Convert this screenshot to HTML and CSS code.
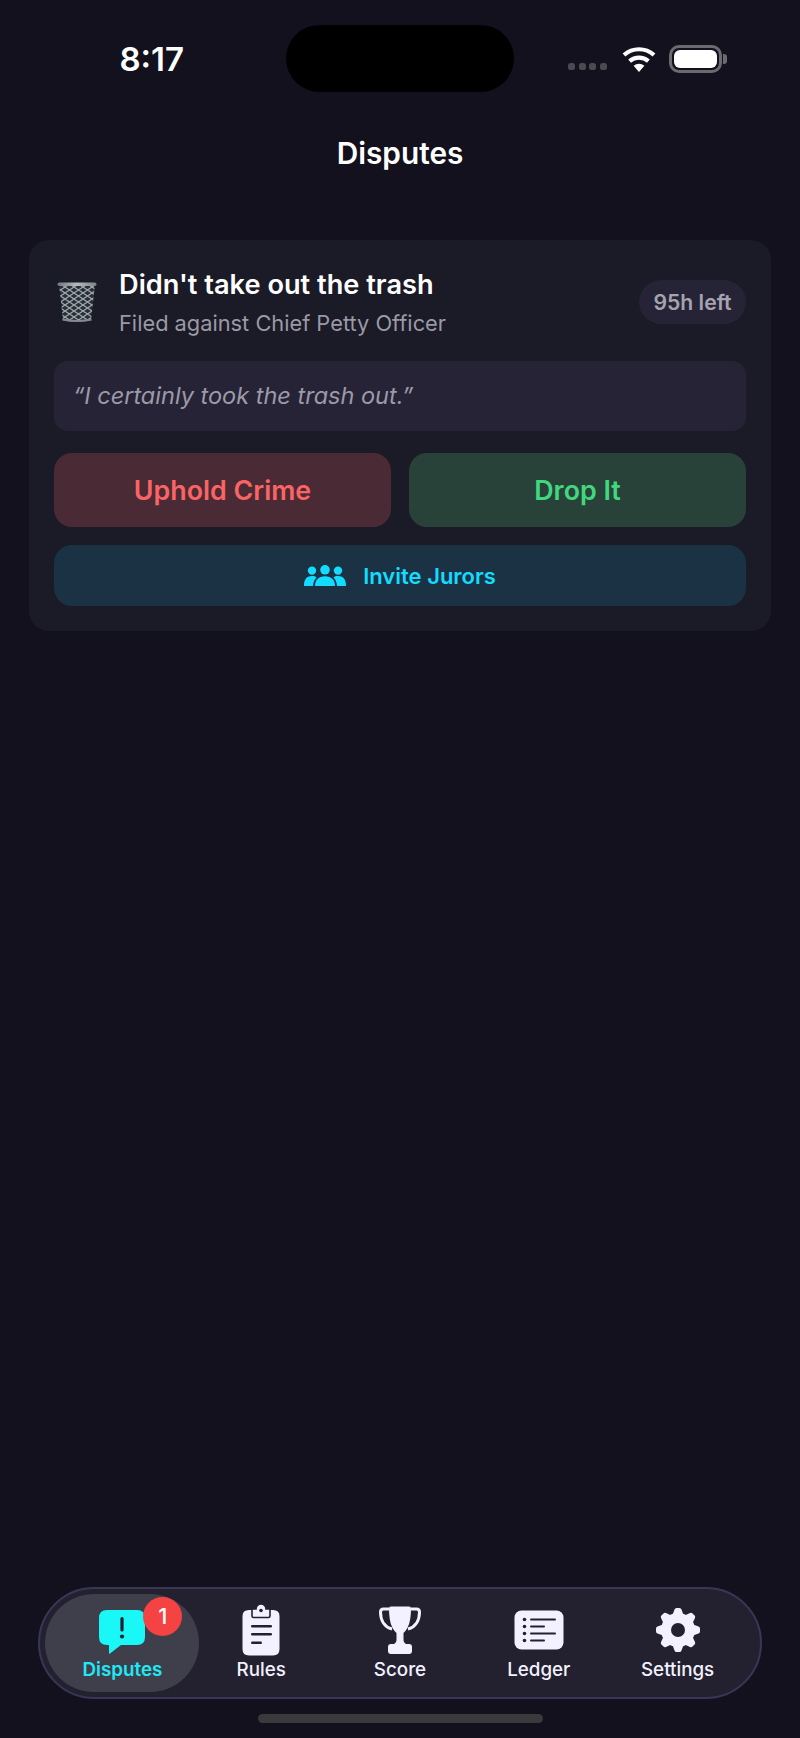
FILE: index.html
```html
<!DOCTYPE html>
<html lang="en">
<head>
  <meta charset="UTF-8">
  <meta name="viewport" content="width=device-width, initial-scale=1.0">
  <title>Disputes</title>
  <link rel="stylesheet" href="styles.css">
</head>
<body>
  <div class="screen">
    <!-- Status bar -->
    <div class="status-bar">
      <div class="time">8:17</div>
      <div class="island"></div>
      <div class="status-icons">
        <div class="signal"><span></span><span></span><span></span><span></span></div>
        <svg class="wifi" width="36" height="26" viewBox="0 0 36 26">
          <path d="M18 26 L12.6 19.8 A8 8 0 0 1 23.4 19.8 Z" fill="#fff"/>
          <path d="M8.6 15.2 A14.4 14.4 0 0 1 27.4 15.2" fill="none" stroke="#fff" stroke-width="4.2"/>
          <path d="M3 9 A22.5 22.5 0 0 1 33 9" fill="none" stroke="#fff" stroke-width="4.2"/>
        </svg>
        <div class="battery"><div class="battery-fill"></div></div>
        <div class="battery-nub"></div>
      </div>
    </div>

    <h1 class="page-title">Disputes</h1>

    <main class="content">
      <div class="card">
        <div class="card-head">
          <svg class="trash" width="42" height="42" viewBox="0 0 42 42">
            <defs>
              <pattern id="mesh" width="9" height="6" patternUnits="userSpaceOnUse">
                <path d="M0 0 L9 6 M9 0 L0 6" stroke="#9fa9b0" stroke-width="1.2"/>
              </pattern>
              <linearGradient id="rim" x1="0" y1="0" x2="1" y2="0">
                <stop offset="0" stop-color="#6f777d"/>
                <stop offset="0.5" stop-color="#b4bbc0"/>
                <stop offset="1" stop-color="#7a8187"/>
              </linearGradient>
            </defs>
            <path d="M3 3 H39 L35 39 Q21 42 7 39 Z" fill="#2a2f36"/>
            <path d="M3 3 H39 L35 39 Q21 42 7 39 Z" fill="url(#mesh)"/>
            <path d="M6.5 38.5 Q21 41.5 35.5 38.5" fill="none" stroke="#838a90" stroke-width="2"/>
            <rect x="1.5" y="1.5" width="39" height="3.6" rx="1.8" fill="url(#rim)"/>
          </svg>
          <div class="card-text">
            <div class="card-title">Didn't take out the trash</div>
            <div class="card-sub">Filed against Chief Petty Officer</div>
          </div>
          <div class="time-left">95h left</div>
        </div>

        <div class="quote">“I certainly took the trash out.”</div>

        <div class="actions">
          <button class="btn btn-uphold">Uphold Crime</button>
          <button class="btn btn-drop">Drop It</button>
        </div>

        <button class="btn-invite">
          <svg width="42" height="22" viewBox="0 0 42 22" fill="#12dcff">
            <circle cx="8" cy="5.6" r="4.2"/>
            <circle cx="34" cy="5.6" r="4.2"/>
            <circle cx="21" cy="4.8" r="4.8"/>
            <path d="M0 20.5 C0 14 3 11 8 11 C10 11 11.5 11.5 12.6 12.4 C10.4 14.4 9.4 17 9 20.5 Q9 21 8.4 21 H1 Q0 21 0 20.5 Z"/>
            <path d="M42 20.5 C42 14 39 11 34 11 C32 11 30.5 11.5 29.4 12.4 C31.6 14.4 32.6 17 33 20.5 Q33 21 33.6 21 H41 Q42 21 42 20.5 Z"/>
            <path d="M11 21 C11 15 14.5 11.2 21 11.2 C27.5 11.2 31 15 31 21 Z"/>
          </svg>
          <span>Invite Jurors</span>
        </button>
      </div>
    </main>

    <!-- Tab bar -->
    <nav class="tab-bar">
      <div class="tab tab-active">
        <div class="tab-icon">
          <svg class="chat-icon" width="46" height="44" viewBox="0 0 46 44">
            <path d="M8 0 H38 Q46 0 46 8 V27 Q46 35 38 35 H22 L11 43.5 Q10 44 10 43 V35 H8 Q0 35 0 27 V8 Q0 0 8 0 Z" fill="#19f7f7"/>
            <rect x="21.4" y="7" width="3.2" height="14.5" rx="1.6" fill="#1a2030"/>
            <circle cx="23" cy="26.5" r="2.1" fill="#1a2030"/>
          </svg>
          <span class="badge">1</span>
        </div>
        <span class="tab-label">Disputes</span>
      </div>
      <div class="tab">
        <div class="tab-icon">
          <svg width="38" height="52" viewBox="0 0 38 52">
            <path d="M7 6 H31 Q37.5 6 37.5 12 V45 Q37.5 51.5 31 51.5 H7 Q0.5 51.5 0.5 45 V12 Q0.5 6 7 6 Z" fill="#f3f1ff"/>
            <path d="M10 6 Q10 5 11 5 H14 A5 5 0 0 1 24 5 H27 Q28 5 28 6 V12 Q28 13.5 26.5 13.5 H11.5 Q10 13.5 10 12 Z" fill="#f3f1ff" stroke="#232130" stroke-width="1.6"/>
            <circle cx="19" cy="6.5" r="1.8" fill="#232130"/>
            <rect x="9" y="21" width="21" height="2.4" rx="1.2" fill="#232130"/>
            <rect x="9" y="29" width="21" height="2.4" rx="1.2" fill="#232130"/>
            <rect x="9" y="37.5" width="11" height="2.4" rx="1.2" fill="#232130"/>
          </svg>
        </div>
        <span class="tab-label">Rules</span>
      </div>
      <div class="tab">
        <div class="tab-icon">
          <svg width="42" height="48" viewBox="0 0 42 48">
            <path d="M10 3 H4.5 Q1.5 3 1.5 6 C1.5 14 5 21 13 23 M32 3 H37.5 Q40.5 3 40.5 6 C40.5 14 37 21 29 23" fill="none" stroke="#f3f1ff" stroke-width="3"/>
            <path d="M10 2 Q10 0.5 12 0.5 H30 Q32 0.5 32 2 C32 14 30 22 24.5 27 V34 C24.5 36 26 37.5 28 38.5 H14 C16 37.5 17.5 36 17.5 34 V27 C12 22 10 14 10 2 Z" fill="#f3f1ff"/>
            <rect x="9" y="38" width="24" height="10" rx="3" fill="#f3f1ff"/>
          </svg>
        </div>
        <span class="tab-label">Score</span>
      </div>
      <div class="tab">
        <div class="tab-icon">
          <svg width="50" height="40" viewBox="0 0 50 40">
            <rect x="0.5" y="0.5" width="49" height="39" rx="7" fill="#f3f1ff"/>
            <circle cx="10.5" cy="9.5" r="1.8" fill="#232130"/>
            <circle cx="10.5" cy="16.5" r="1.8" fill="#232130"/>
            <circle cx="10.5" cy="23.5" r="1.8" fill="#232130"/>
            <circle cx="10.5" cy="30.5" r="1.8" fill="#232130"/>
            <rect x="16" y="8.5" width="26" height="2" rx="1" fill="#232130"/>
            <rect x="16" y="15.5" width="15" height="2" rx="1" fill="#232130"/>
            <rect x="16" y="22.5" width="26" height="2" rx="1" fill="#232130"/>
            <rect x="16" y="29.5" width="15" height="2" rx="1" fill="#232130"/>
          </svg>
        </div>
        <span class="tab-label">Ledger</span>
      </div>
      <div class="tab">
        <div class="tab-icon">
          <svg width="46" height="46" viewBox="0 0 46 46">
            <defs>
              <path id="tooth" d="M17.5 8 L19.5 2.5 Q20 1 21.5 1 H24.5 Q26 1 26.5 2.5 L28.5 8 Z"/>
            </defs>
            <g fill="#f3f1ff">
              <circle cx="23" cy="23" r="17"/>
              <use href="#tooth"/>
              <use href="#tooth" transform="rotate(45 23 23)"/>
              <use href="#tooth" transform="rotate(90 23 23)"/>
              <use href="#tooth" transform="rotate(135 23 23)"/>
              <use href="#tooth" transform="rotate(180 23 23)"/>
              <use href="#tooth" transform="rotate(225 23 23)"/>
              <use href="#tooth" transform="rotate(270 23 23)"/>
              <use href="#tooth" transform="rotate(315 23 23)"/>
            </g>
            <circle cx="23" cy="23" r="7" fill="#232130"/>
          </svg>
        </div>
        <span class="tab-label">Settings</span>
      </div>
    </nav>

    <div class="home-indicator"></div>
  </div>
</body>
</html>
```
FILE: styles.css
```css
/* Disputes screen */
body {
  margin: 0;
  padding: 0;
  background: #12111d;
  color: #fff;
  font-family: Inter, "Liberation Sans", sans-serif;
}

.screen {
  height: 1738px;
  display: flex;
  flex-direction: column;
  overflow: hidden;
}

/* Status bar */
.status-bar {
  display: flex;
  height: 67px;
  margin-top: 25px;
}

.time {
  width: 286px;
  box-sizing: border-box;
  text-align: right;
  padding-right: 102px;
  font-size: 33px;
  font-weight: 600;
  line-height: 68px;
}

.island {
  width: 228px;
  height: 67px;
  background: #000;
  border-radius: 34px;
}

.status-icons {
  display: flex;
  align-items: center;
  padding-left: 54px;
  height: 67px;
}

.signal {
  display: flex;
  gap: 3.5px;
  margin-top: 16px;
  margin-right: 14px;
}

.signal span {
  width: 7px;
  height: 7px;
  border-radius: 2.5px;
  background: #4b4a52;
}

.wifi {
  margin-right: 12px;
}

.battery {
  width: 53px;
  height: 28px;
  box-sizing: border-box;
  border: 3px solid #6b6a70;
  border-radius: 10px;
  padding: 2px;
}

.battery-fill {
  height: 100%;
  background: #fff;
  border-radius: 6px;
}

.battery-nub {
  width: 4px;
  height: 10px;
  margin-left: 1px;
  background: #6b6a70;
  border-radius: 0 3px 3px 0;
}

.page-title {
  margin: 43px 0 0;
  text-align: center;
  font-size: 29.8px;
  font-weight: 600;
  line-height: 36px;
}

.content {
  flex: 1;
  padding: 69px 29px 0;
}

/* Card */
.card {
  background: #1b1a27;
  border-radius: 20px;
  padding: 26px 25px 24px;
  height: 391px;
  box-sizing: border-box;
}

.card-head {
  display: flex;
  align-items: center;
  height: 72px;
  margin-bottom: 23px;
}

.trash {
  margin: 0 21px 0 2px;
  flex-shrink: 0;
}

.card-text {
  flex: 1;
  margin-top: 4px;
}

.card-title {
  font-size: 27.2px;
  font-weight: 600;
  line-height: 38px;
}

.card-sub {
  font-size: 21.8px;
  line-height: 38px;
  color: #9a99a5;
}

.time-left {
  height: 44px;
  width: 107px;
  text-align: center;
  line-height: 44px;
  border-radius: 22px;
  background: #262336;
  color: #a5a3b0;
  font-size: 21.2px;
  font-weight: 600;
}

.quote {
  height: 70px;
  line-height: 70px;
  padding-left: 19px;
  background: #262336;
  border-radius: 14px;
  color: #9c9aa8;
  font-size: 23.5px;
  font-style: italic;
  margin-bottom: 22px;
}

.actions {
  display: flex;
  gap: 18px;
  margin-bottom: 18px;
}

.btn {
  flex: 1;
  height: 74px;
  border: none;
  border-radius: 18px;
  font-family: inherit;
  font-size: 26.8px;
  font-weight: 600;
}

.btn-uphold {
  background: #4a2a35;
  color: #fa6464;
}

.btn-drop {
  background: #28423a;
  color: #42d77d;
}

.btn-invite {
  width: 100%;
  height: 61px;
  border: none;
  border-radius: 18px;
  background: #1a3244;
  color: #12dcff;
  font-family: inherit;
  font-size: 22px;
  font-weight: 600;
  display: flex;
  align-items: center;
  justify-content: center;
  gap: 17px;
}

/* Tab bar */
.tab-bar {
  position: relative;
  margin: 0 38px;
  height: 112px;
  box-sizing: border-box;
  border: 2px solid #3a3756;
  border-radius: 56px;
  background: #232130;
  display: flex;
  padding: 0 13px;
}

.tab {
  position: relative;
  flex: 1;
  display: flex;
  flex-direction: column;
  align-items: center;
  padding-top: 15px;
}

.tab-active::before {
  content: "";
  position: absolute;
  left: -8px;
  right: -7px;
  top: 5px;
  height: 98px;
  background: #3f3e4b;
  border-radius: 49px;
}

.tab-icon {
  position: relative;
  height: 52px;
  display: flex;
  align-items: center;
  justify-content: center;
}

.chat-icon {
  margin-top: 3px;
}

.tab-label {
  position: relative;
  margin-top: 2px;
  font-size: 18.8px;
  font-weight: 500;
  line-height: 24px;
  color: #f3f1ff;
}

.tab-active .tab-label {
  color: #1fe9f5;
  font-weight: 600;
}

.badge {
  position: absolute;
  left: 44px;
  top: -7px;
  width: 39px;
  height: 39px;
  border-radius: 50%;
  background: #f54242;
  color: #fff;
  text-align: center;
  font-size: 22px;
  font-weight: 500;
  line-height: 39px;
}

.home-indicator {
  width: 285px;
  height: 9px;
  margin: 15px auto;
  background: #3a3a3d;
  border-radius: 5px;
}
```
